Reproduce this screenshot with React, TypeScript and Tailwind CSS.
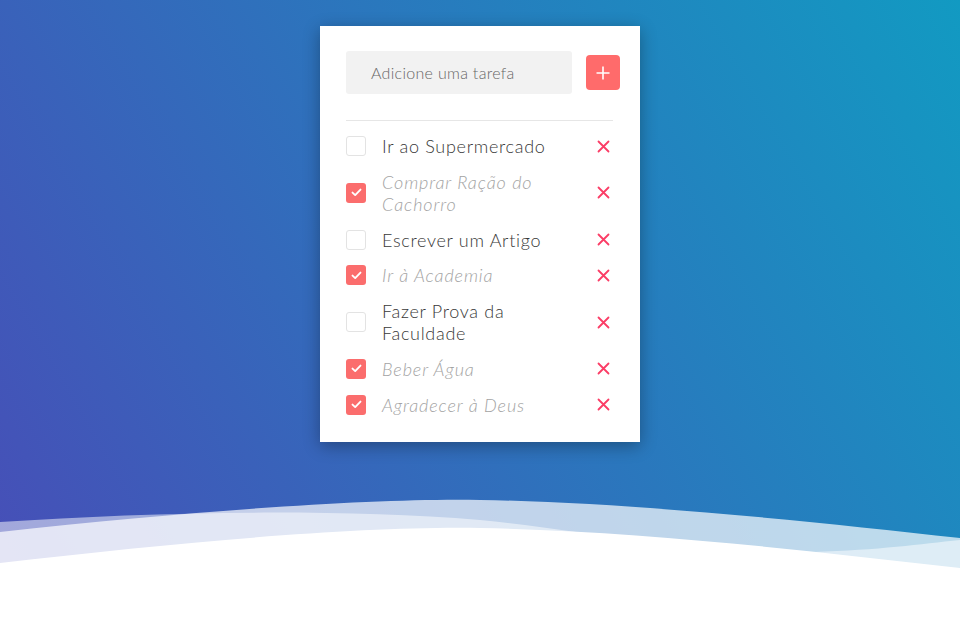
import React from "react";

type Task = { text: string; done: boolean };

const tasks: Task[] = [
  { text: "Ir ao Supermercado", done: false },
  { text: "Comprar Ração do Cachorro", done: true },
  { text: "Escrever um Artigo", done: false },
  { text: "Ir à Academia", done: true },
  { text: "Fazer Prova da Faculdade", done: false },
  { text: "Beber Água", done: true },
  { text: "Agradecer à Deus", done: true },
];

function Check({ done }: { done: boolean }) {
  if (done) {
    return (
      <div className="flex h-[20px] w-[20px] shrink-0 items-center justify-center rounded-[3px] bg-[#fb6d6d]">
        <svg width="11" height="9" viewBox="0 0 11 9" fill="none">
          <path d="M1.5 4.6 L4.2 7.1 L9.5 1.6" stroke="#fff" strokeWidth="1.9" strokeLinecap="round" strokeLinejoin="round" />
        </svg>
      </div>
    );
  }
  return <div className="h-[20px] w-[20px] shrink-0 rounded-[3px] border border-[#e3e3e3] bg-white" />;
}

function XIcon() {
  return (
    <svg width="13" height="13" viewBox="0 0 13 13" fill="none">
      <path d="M1.5 1.5 L11.5 11.5 M11.5 1.5 L1.5 11.5" stroke="#fb3d66" strokeWidth="1.8" strokeLinecap="round" />
    </svg>
  );
}

export default function App() {
  return (
    <div
      className="relative h-[620px] w-full overflow-hidden bg-[linear-gradient(60deg,#484db7,#129ac2)]"
      style={{ fontFamily: "Lato, 'Open Sans', sans-serif" }}
    >
      <svg
        className="absolute bottom-0 left-0"
        width="960"
        height="130"
        viewBox="0 0 960 130"
        preserveAspectRatio="none"
      >
        <path d="M0 42 C 200 20, 380 8, 480 10 C 620 12, 800 30, 960 48 L960 130 L0 130 Z" fill="#fff" fillOpacity="0.7" />
        <path d="M0 32 C 150 22, 330 18, 480 30 C 600 42, 700 66, 813 62 C 880 60, 920 54, 960 50 L960 130 L0 130 Z" fill="#fff" fillOpacity="0.5" />
        <path d="M0 73 C 180 52, 360 36, 480 38 C 640 41, 800 60, 960 78 L960 130 L0 130 Z" fill="#fff" />
      </svg>

      <div className="relative z-10 mx-auto mt-[26px] w-[320px] bg-white pb-[26px] pl-[26px] pr-[27px] pt-[25px] shadow-[0_4px_16px_rgba(0,0,0,0.32)]">
        <div className="flex items-center">
          <div className="flex h-[43px] w-[226px] shrink-0 items-center rounded-[3px] bg-[#f2f2f2] pl-[25px] text-[16px] font-light tracking-[0.3px] text-[#666]">
            Adicione uma tarefa
          </div>
          <div className="ml-[14px] flex h-[35px] w-[34px] shrink-0 items-center justify-center rounded-[4px] bg-[#ff6b6b]">
            <svg width="14" height="14" viewBox="0 0 14 14" fill="none">
              <path d="M7 0.5 V13.5 M0.5 7 H13.5" stroke="#fff" strokeWidth="1.6" />
            </svg>
          </div>
        </div>

        <div className="mt-[26px] h-px w-full bg-[#e6e6e6]" />

        <div className="mt-[14px] flex flex-col gap-[13.8px]">
          {tasks.map((t, i) => (
            <div key={i} className="flex items-center">
              <Check done={t.done} />
              <div
                className={
                  t.done
                    ? "ml-[16px] w-[190px] text-[18px] font-light italic leading-[22px] tracking-[0.9px] text-[#a3a3a3]"
                    : "ml-[16px] w-[190px] text-[18px] font-light leading-[22px] tracking-[0.7px] text-[#383838]"
                }
              >
                {t.text}
              </div>
              <div className="ml-auto mr-[3px] flex items-center">
                <XIcon />
              </div>
            </div>
          ))}
        </div>
      </div>
    </div>
  );
}
